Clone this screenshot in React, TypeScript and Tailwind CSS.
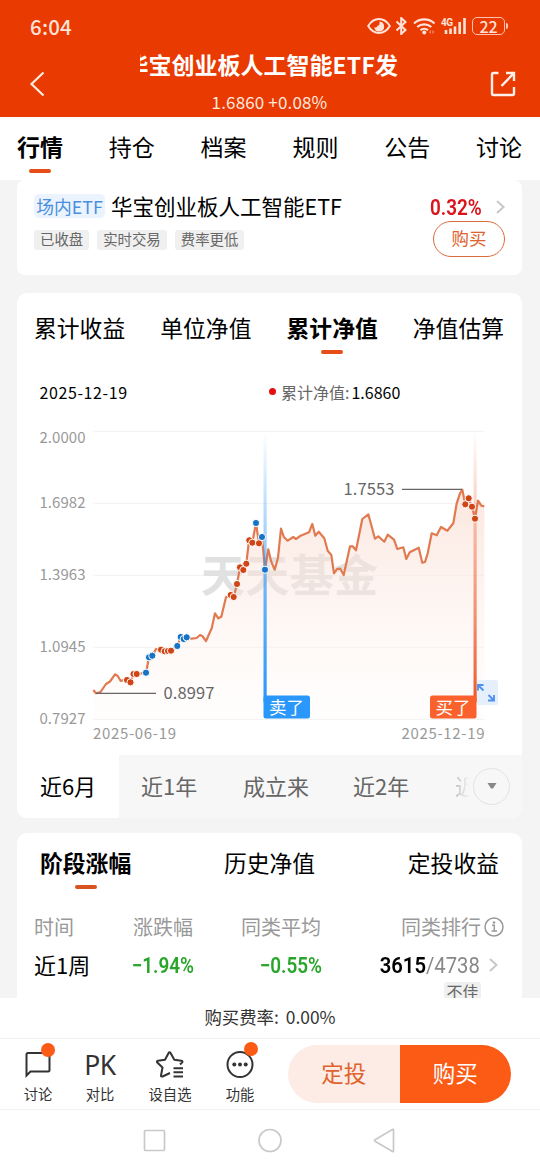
import clsx from 'clsx';

type Point = [number, number];

const NAV_TABS = ['行情', '持仓', '档案', '规则', '公告', '讨论'];
const CHART_TABS = ['累计收益', '单位净值', '累计净值', '净值估算'];

// Chart coordinates share one space, see the viewBox of TrendChart
const LINE: Point[] = [
  [93.3, 690], [96, 693.3], [100.5, 692], [106, 684], [110, 681.5], [115, 674.3], [117.7, 676],
  [120.7, 681], [123.5, 680], [127, 680], [130.5, 682.3], [133.5, 674], [136.7, 674], [140.5, 673.5],
  [146, 672.7], [149, 657.3], [152.3, 655.7], [156, 649], [161, 649.7], [164.7, 651.3], [168, 651],
  [171, 650.7], [177.3, 646], [180.7, 637], [183.7, 639], [186.7, 637.3], [191.7, 638.7], [196.7, 638],
  [200, 635], [202.3, 636], [206, 641], [211.7, 628.3], [215, 613.3], [218.3, 618.3], [221.3, 616.7],
  [226, 597.3], [230.7, 595], [233.7, 597], [237, 584], [240, 567.3], [243.3, 570], [246.3, 563.7],
  [249, 540.3], [252.3, 542.7], [256, 523], [259, 543.3], [262, 537], [265, 569.7], [268.3, 549.3],
  [271, 561], [274.7, 569.7], [278, 557.7], [281, 528.7], [284, 537.3], [287.7, 540.7], [293.3, 537],
  [296, 539], [300.7, 535.7], [309, 532.3], [312.3, 524], [315.3, 535.7], [318.7, 531.7], [324.3, 538.3],
  [327.7, 550.7], [331.3, 555], [334, 573.3], [337, 569], [340.3, 568.7], [343.7, 575], [350, 546.3],
  [352.7, 546.3], [356, 550.3], [362.3, 519], [368.3, 514.3], [375, 538.7], [378.3, 536.3],
  [384.3, 541.7], [387.7, 534.7], [394, 539.7], [397.3, 549], [403.3, 547.3], [406.3, 559],
  [409.7, 552.3], [418.7, 547.7], [422.3, 562.7], [425, 562], [427.7, 553.3], [431.7, 533.3],
  [436.7, 535.3], [441, 527], [447.3, 530.7], [453.3, 523.3], [456.7, 503.3], [460, 493.3],
  [462.3, 489.7], [465.3, 504.3], [468.7, 498.3], [472, 506.7], [475, 518.7], [478, 500.7],
  [481.3, 505.7], [484.3, 506.3],
];

const BUYS: Point[] = [
  [127, 680], [130.5, 682.3], [133.5, 674], [136.7, 674], [161, 649.7], [164.7, 651.3], [168, 651],
  [171, 650.7], [230.7, 595], [233.7, 597], [237, 584], [240, 567.3], [243.3, 570], [246.3, 563.7],
  [249.3, 540.3], [252.3, 542.7], [259, 543.3], [465.3, 504.3], [468.7, 498.3], [472, 506.7], [475, 518.7],
];
const SELLS: Point[] = [
  [146, 672.7], [149, 657.3], [152.3, 655.7], [177.3, 646], [180.7, 637], [183.7, 639], [186.7, 637.3],
  [256, 523], [262, 537], [265, 569.7],
];

const AXIS = [
  { y: 431.3, text: 437, label: '2.0000' },
  { y: 503.3, text: 502.5, label: '1.6982' },
  { y: 575.3, text: 574.5, label: '1.3963' },
  { y: 647.3, text: 646.5, label: '1.0945' },
  { y: 719.3, text: 718.5, label: '0.7927' },
];

function StatusBar() {
  return (
    <div className="flex h-[52px] items-center pl-[30px] pr-[32px] text-[#ffe3d8]">
      <span className="text-[20.500px] font-medium tracking-[0.2px]">6:04</span>
      <svg className="ml-auto" width="24" height="18" viewBox="0 0 24 18" fill="none" stroke="currentColor" strokeWidth="2">
        <path d="M1.2 9C4 4.3 7.6 2 12 2s8 2.3 10.8 7C20 13.700 16.400 16 12 16S4 13.700 1.200 9Z" />
        <path d="M12.500 4.500a5 5 0 1 1-5.300 5.800c2 .6 3.300-.2 3.200-1.700 1.300.4 2.600-.6 2.100-4.100Z" fill="currentColor" stroke="none" />
      </svg>
      <svg className="ml-[4px]" width="13" height="18" viewBox="0 0 13 18" fill="none" stroke="currentColor" strokeWidth="2">
        <path d="m1.500 4.500 9 8.500-4.300 4V1l4.300 4-9 8.500" />
      </svg>
      <svg className="ml-[5px]" width="23" height="18" viewBox="0 0 23 18" fill="none" stroke="currentColor" strokeWidth="2.200">
        <path d="M1 6.500a15 15 0 0 1 20.500 0M4.200 10a10.500 10.500 0 0 1 14.100 0M7.500 13.200a5.700 5.700 0 0 1 7.500 0" />
        <circle cx="11.300" cy="15.500" r="2" fill="currentColor" stroke="none" />
        <path d="m18 13-2 2 2 2Zm1.500 0 2 2-2 2Z" fill="#ff8a66" stroke="none" />
      </svg>
      <svg className="ml-[5px] overflow-visible" width="26" height="18" viewBox="0 0 26 18">
        <text x="0" y="8.500" textLength="12" className="font-[Roboto] text-[10px] font-bold" fill="currentColor">4G</text>
        <path d="M5 13v4M9.500 11.500V17M14 9.500V17M18.700 5v12M23.500 1v16" stroke="currentColor" strokeWidth="2.600" fill="none" />
      </svg>
      <div className="ml-[5px] flex h-[18px] w-[33px] items-center justify-center rounded-[5px] border-[1.500px] border-[#ffc4b0]">
        <span className="text-[16px] font-medium leading-[18px] -translate-y-[0.5px]">22</span>
      </div>
      <div className="ml-px h-[6px] w-[2px] rounded-r bg-[#ffc4b0]" />
    </div>
  );
}

function Header() {
  return (
    <header className="h-[117px] shrink-0 bg-[#e93a02] text-white">
      <StatusBar />
      <div className="flex h-[65px] items-start justify-between pl-[28px] pr-[24px]">
        <svg className="mt-[19px]" width="18" height="26" viewBox="0 0 18 26" fill="none" stroke="#ffebe2" strokeWidth="2.200">
          <path d="M15.500 1.500 3.500 13l12 11.500" />
        </svg>
        <div className="ml-[3px] w-[260px]">
          <div className="h-[28px] overflow-hidden">
            <div className="-ml-[14px] whitespace-nowrap text-[23px] font-bold leading-[24px]">
              华宝创业板人工智能<span className="tracking-[0.2px]">ETF</span>发
            </div>
          </div>
          <div className="mt-[11px] text-center text-[17px] leading-[22px] tracking-[0.15px] text-[#ffe9df]">1.6860 +0.08%</div>
        </div>
        <svg className="mt-[19px]" width="26" height="26" viewBox="0 0 26 26" fill="none" stroke="#fff0e9" strokeWidth="2.400">
          <path d="M8.500 2H3.500Q2 2 2 3.500v19Q2 24 3.500 24h19q1.500 0 1.500-1.500V16M16 2H24v8M23.500 2.500 11.500 15" />
        </svg>
      </div>
    </header>
  );
}

function NavTabs() {
  return (
    <nav className="flex h-[63px] shrink-0 justify-between bg-white pl-[17px] pr-[18px]">
      {NAV_TABS.map((tab, i) => (
        <div key={tab} className="flex flex-col items-center">
          <span className={clsx('pt-[13px] text-[23px] leading-[33px]', i === 0 && 'font-bold')}>{tab}</span>
          {i === 0 && <i className="mt-[6px] h-[4px] w-[22px] rounded-full bg-[#e54e18]" />}
        </div>
      ))}
    </nav>
  );
}

function Chevron() {
  return (
    <svg width="9" height="16" viewBox="0 0 9 16" fill="none" stroke="#c8c8c8" strokeWidth="2">
      <path d="m1 2 6.500 6L1 14" />
    </svg>
  );
}

function EtfCard() {
  return (
    <section className="flex h-[95px] shrink-0 justify-between rounded-[8px] bg-white px-[17px]">
      <div>
        <div className="mt-[11px] flex h-[30px] items-center">
          <span className="flex h-[24px] w-[71px] items-center justify-center rounded-[5px] bg-[#ebf4fe] text-[17.800px] text-[#4a8fdf]">
            场内ETF
          </span>
          <span className="ml-[6px] text-[21.500px]">华宝创业板人工智能ETF</span>
        </div>
        <div className="mt-[9px] flex gap-[8px] text-[14.400px] text-[#666]">
          {['已收盘', '实时交易', '费率更低'].map((tag) => (
            <span key={tag} className="flex h-[20px] items-center rounded-[3px] bg-[#f0f0f0] px-[6px]">
              <span className="-translate-y-px">{tag}</span>
            </span>
          ))}
        </div>
      </div>
      <div className="flex flex-col items-end">
        <div className="mt-[13px] flex h-[28px] items-center">
          <span className="mr-[12px] w-[54px] text-[#d9141c]">
            <span className="inline-block origin-left scale-x-[0.86] font-[Roboto] text-[22px] font-semibold">0.32%</span>
          </span>
          <Chevron />
        </div>
        <button className="flex h-[36px] w-[72px] items-center justify-center rounded-full border border-[#d96b3d] pb-[2px] text-[17.500px] text-[#e0622d]">
          购买
        </button>
      </div>
    </section>
  );
}

function TrendChart() {
  const line = LINE.map(([x, y], i) => `${i ? 'L' : 'M'}${x} ${y}`).join('');
  return (
    <svg className="block" width="505" height="345" viewBox="17 410 505 345">
      <defs>
        <linearGradient id="area" x1="0" y1="0" x2="0" y2="1">
          <stop offset="0" stopColor="#f9d9cd" stopOpacity="0.65" />
          <stop offset="1" stopColor="#fff8f5" stopOpacity="0.2" />
        </linearGradient>
        <linearGradient id="sell" gradientUnits="userSpaceOnUse" x1="0" y1="432" x2="0" y2="700">
          <stop offset="0" stopColor="#2a98fa" stopOpacity="0" />
          <stop offset="0.65" stopColor="#2a98fa" stopOpacity="0.75" />
          <stop offset="1" stopColor="#2a98fa" />
        </linearGradient>
        <linearGradient id="buy" gradientUnits="userSpaceOnUse" x1="0" y1="432" x2="0" y2="700">
          <stop offset="0" stopColor="#ee5b2b" stopOpacity="0" />
          <stop offset="0.65" stopColor="#ee6b42" stopOpacity="0.7" />
          <stop offset="1" stopColor="#ee5a2a" />
        </linearGradient>
      </defs>
      {AXIS.map((a) => (
        <g key={a.label}>
          <path d={`M93 ${a.y}H484.500`} stroke="#f2f2f2" />
          <text x="85.500" y={a.text + 5.500} textAnchor="end" textLength="46" className="text-[15px]" fill="#999">{a.label}</text>
        </g>
      ))}
      <text x="201" y="592" textLength="177" className="text-[44px] font-bold" fill="#e1e1e1">天天基金</text>
      <path d={`${line}V719H93.300Z`} fill="url(#area)" />
      <path d={line} fill="none" stroke="#e17a50" strokeWidth="2.200" strokeLinejoin="round" />
      <path d="M96 693.300H156M402 489.300H462" stroke="#666" strokeWidth="1.300" />
      <text x="163.500" y="699" textLength="51" className="text-[16.500px]" fill="#666">0.8997</text>
      <text x="343.500" y="495" textLength="51" className="text-[16.500px]" fill="#666">1.7553</text>
      <rect x="476.500" y="680" width="21.500" height="25" rx="2" fill="#e6f0fd" />
      <path d="M478 690.500V685h5.500M478.500 685.500l5 5M494 695v5.500h-6M493.500 700l-5-5" fill="none" stroke="#4c8ff0" strokeWidth="1.800" />
      <rect x="263.500" y="432" width="3.200" height="270" fill="url(#sell)" />
      <rect x="473.500" y="432" width="3.200" height="270" fill="url(#buy)" />
      {BUYS.map(([x, y]) => (
        <circle key={`${x}-${y}`} cx={x} cy={y} r="3.600" fill="#cf4515" stroke="#fff" />
      ))}
      {SELLS.map(([x, y]) => (
        <circle key={`${x}-${y}`} cx={x} cy={y} r="3.600" fill="#1673c6" stroke="#fff" />
      ))}
      <rect x="263.500" y="695.500" width="46.500" height="23" rx="2.500" fill="#2a98fa" />
      <text x="269" y="713.500" className="text-[17.500px]" fill="#fff">卖了</text>
      <rect x="430" y="695.500" width="46.500" height="23" rx="2.500" fill="#fb612c" />
      <text x="435.500" y="713.500" className="text-[17.500px]" fill="#fff">买了</text>
      <text x="93" y="739" textLength="83" className="text-[15px]" fill="#999">2025-06-19</text>
      <text x="401.500" y="739" textLength="83" className="text-[15px]" fill="#999">2025-12-19</text>
    </svg>
  );
}

function ChartCard() {
  return (
    <section className="mt-[18px] h-[525px] shrink-0 overflow-hidden rounded-[10px] bg-white">
      <div className="flex h-[72px] justify-between pl-[17px] pr-[18px]">
        {CHART_TABS.map((tab, i) => (
          <div key={tab} className="flex flex-col items-center">
            <span className={clsx('pt-[18px] text-[22.800px] leading-[33px]', i === 2 && 'font-bold')}>{tab}</span>
            {i === 2 && <i className="mt-[6px] h-[4px] w-[22px] rounded-full bg-[#e54e18]" />}
          </div>
        ))}
      </div>
      <div className="flex h-[45px] items-center pt-[9px] pb-px pl-[22.500px] text-[16px]">
        <span className="w-[229.500px] tracking-[0.6px]">2025-12-19</span>
        <i className="h-[7px] w-[7px] rounded-full bg-[#e60f0f]" />
        <span className="ml-[5px] text-[#666]">累计净值:</span>
        <span className="ml-[2px]">1.6860</span>
      </div>
      <TrendChart />
      <div className="flex h-[63px] items-center bg-[#f7f7f7] pb-px text-[22px] text-[#666]">
        <span className="flex h-[64px] w-[102px] items-center justify-center bg-white pb-px text-black">近6月</span>
        <span className="ml-[22px] w-[102px] pb-px">近1年</span>
        <span className="w-[110px] pb-px">成立来</span>
        <span className="w-[102px] pb-px">近2年</span>
        <span className="w-[14px] overflow-hidden whitespace-nowrap bg-gradient-to-r from-[#bbb] to-[#f4f4f4] bg-clip-text pb-px text-transparent">近3年</span>
        <span className="ml-[4px] flex h-[37px] w-[37px] items-center justify-center rounded-full border border-[#e3e3e3]">
          <svg width="10" height="6" viewBox="0 0 10 6"><path d="M0.500 0h9L6 5.500H4Z" fill="#888" /></svg>
        </span>
      </div>
    </section>
  );
}

function StageCard() {
  return (
    <section className="mt-[15px] h-[165px] shrink-0 overflow-hidden rounded-t-[10px] bg-white px-[17px]">
      <div className="flex h-[77px] justify-between px-[6px] text-[22.800px] leading-[33px]">
        <div className="flex flex-col items-center pt-[13px]">
          <span className="font-bold">阶段涨幅</span>
          <i className="mt-[6px] h-[4px] w-[22px] rounded-full bg-[#d9531f]" />
        </div>
        <span className="pt-[13px]">历史净值</span>
        <span className="pt-[13px]">定投收益</span>
      </div>
      <div className="grid h-[34px] grid-cols-[60px_99px_128px_183px] items-center text-[20px] text-[#999]">
        <span>时间</span>
        <span className="text-right">涨跌幅</span>
        <span className="text-right">同类平均</span>
        <span className="flex items-center justify-end">
          同类排行
          <svg className="ml-[3px]" width="20" height="20" viewBox="0 0 20 20" fill="none" stroke="#999" strokeWidth="1.500">
            <circle cx="10" cy="10" r="9" />
            <path d="M8 8.300h2.300v5.500M7.500 14h5.500" />
            <circle cx="10" cy="5.500" r="1.300" fill="#999" stroke="none" />
          </svg>
        </span>
      </div>
      <div className="grid h-[42px] grid-cols-[60px_100px_128px_176px] items-center text-[22px]">
        <span className="whitespace-nowrap pb-px">近1周</span>
        <span className="origin-right scale-x-[0.86] text-right font-[Roboto] font-semibold text-[#29a52b]">−1.94%</span>
        <span className="origin-right scale-x-[0.86] text-right font-[Roboto] font-semibold text-[#29a52b]">−0.55%</span>
        <span className="flex items-center justify-end">
          <span className="mr-[9px] origin-right scale-x-[0.92] font-[Roboto]">
            <b className="font-semibold">3615</b><span className="text-[#888]">/4738</span>
          </span>
          <Chevron />
        </span>
      </div>
      <div className="-mt-[4px] flex justify-end pr-[24px]">
        <span className="flex h-[21px] w-[37px] items-center justify-center rounded-[3px] bg-[#f0f0f0] pb-[3px] text-[16px] text-[#666]">不佳</span>
      </div>
    </section>
  );
}

function Badge() {
  return <i className="absolute -right-[4px] -top-[9px] h-[14px] w-[14px] rounded-full bg-[#fb5b14]" />;
}

function ToolBar() {
  return (
    <div className="flex h-[72px] border-y border-[#f3f3f3] text-[14.300px] text-[#333]">
      <div className="ml-[17px] flex w-[42px] flex-col items-center">
        <div className="relative mt-[13px]">
          <svg width="26" height="26" viewBox="0 0 26 26" fill="none" stroke="currentColor" strokeWidth="2">
            <path d="M1.500 23.500V2.500Q1.500 1 3 1h20Q24.500 1 24.500 2.500v15.500q0 1.500-1.500 1.500H5.500Z" />
          </svg>
          <Badge />
        </div>
        <span className="mt-[5px] leading-[22px]">讨论</span>
      </div>
      <div className="ml-[20px] flex w-[42px] flex-col items-center">
        <span className="mt-[12px] h-[27px] font-['Noto_Sans'] text-[26.500px] leading-[28px] tracking-[-0.5px]">PK</span>
        <span className="mt-[5px] leading-[22px]">对比</span>
      </div>
      <div className="ml-[26px] flex w-[46px] flex-col items-center">
        <svg className="mt-[12px]" width="28" height="27" viewBox="0 0 28 27" fill="none" stroke="currentColor" strokeWidth="2" strokeLinejoin="round">
          <path d="m14 22-7.500 3.500q-1.600.5-1.500-1l1.500-8-5.200-5q-1.200-1.300.7-1.800l7-1 3.500-6.500q1-1.800 2.200 0l3.600 6.500 7 1q2 .6.700 1.900L24 13.500M17.500 17.200h9.500M17.500 21.300h9.500M17.500 25.500h9.500" />
        </svg>
        <span className="mt-[5px] whitespace-nowrap leading-[22px]">设自选</span>
      </div>
      <div className="ml-[26px] flex w-[42px] flex-col items-center">
        <div className="relative mt-[12px]">
          <svg width="28" height="27" viewBox="0 0 28 27" fill="none" stroke="currentColor" strokeWidth="2">
            <circle cx="14" cy="13.500" r="12.500" />
            <g fill="currentColor" stroke="none">
              <circle cx="8.300" cy="13.500" r="2" />
              <circle cx="14" cy="13.500" r="2" />
              <circle cx="19.700" cy="13.500" r="2" />
            </g>
          </svg>
          <Badge />
        </div>
        <span className="mt-[5px] leading-[22px]">功能</span>
      </div>
      <div className="ml-[27px] mt-[6px] flex h-[58px] w-[223px] overflow-hidden rounded-full text-[22.500px]">
        <button className="w-1/2 bg-[#fdece5] pb-[2px] text-[#e0622d]">定投</button>
        <button className="w-1/2 bg-[#fb5b14] pb-[2px] text-white">购买</button>
      </div>
    </div>
  );
}

function SystemNav() {
  return (
    <svg className="ml-[143px] mt-[18px]" width="254" height="26" viewBox="0 0 254 26" fill="none" stroke="#c9c9c9" strokeWidth="1.700">
      <rect x="1.500" y="2.500" width="20" height="20" rx="1" />
      <circle cx="127" cy="12.500" r="11" />
      <path d="M250.500 2v21q0 1-1 .5l-17.500-10.300q-1-.7 0-1.400l17.500-10.300q1-.5 1 .5Z" />
    </svg>
  );
}

export default function App() {
  return (
    <div className="flex h-[1170px] w-[540px] flex-col overflow-hidden bg-[#f4f4f4] font-['Noto_Sans_CJK_SC',sans-serif] text-black">
      <Header />
      <NavTabs />
      <main className="flex h-[818px] shrink-0 flex-col overflow-hidden pl-[17px] pr-[18px]">
        <EtfCard />
        <ChartCard />
        <StageCard />
      </main>
      <footer className="h-[172px] shrink-0 bg-white">
        <div className="flex h-[40px] items-center justify-center pb-px text-[17.400px] text-[#333]">
          购买费率:<span className="ml-[7px]">0.00%</span>
        </div>
        <ToolBar />
        <SystemNav />
      </footer>
    </div>
  );
}
